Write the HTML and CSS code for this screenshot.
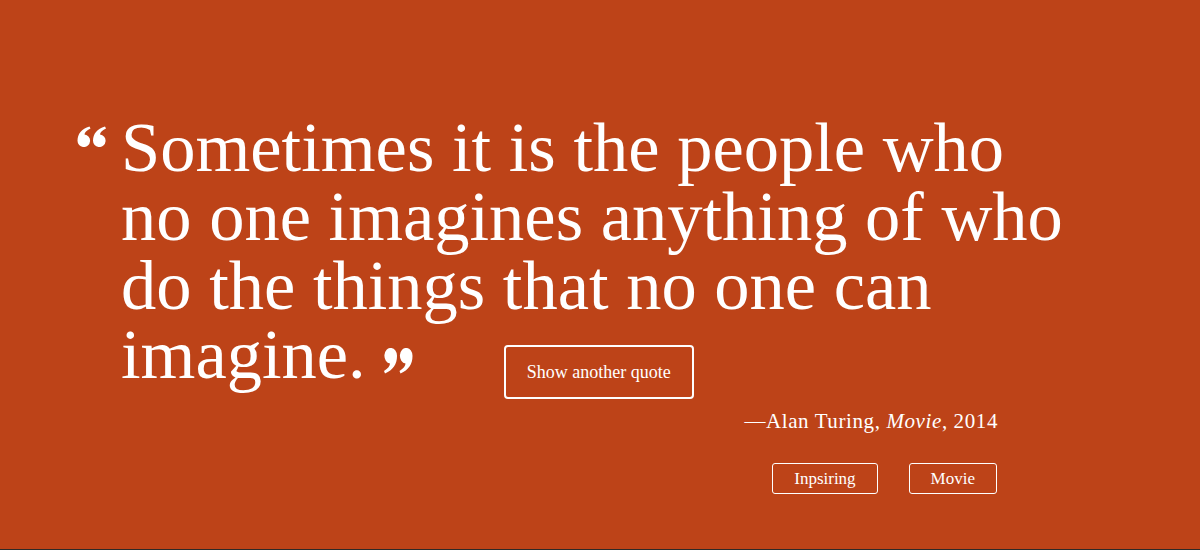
FILE: index.html
```html
<!DOCTYPE html>
<html lang="en">
<head>
<meta charset="utf-8">
<title>Quote</title>
<link rel="stylesheet" href="styles.css">
</head>
<body>
<main class="page">
  <section class="card">
    <div class="quote">
      <svg class="q-open" viewBox="0 0 30 21" aria-hidden="true">
        <path d="M0.5 14.5 C0.5 8 4.5 3 12.5 0.5 L13.5 2.5 C9.5 4.5 7.5 6.5 7.5 8.5 A6.3 6.3 0 1 1 0.5 14.5 Z"/>
        <path d="M16 14.5 C16 8 20 3 28 0.5 L29 2.5 C25 4.5 23 6.5 23 8.5 A6.3 6.3 0 1 1 16 14.5 Z"/>
      </svg>
      <p class="quote-text"><span class="words">Sometimes it is the people who no one imagines anything of who do the things that no one can imagine.</span><svg class="q-close" viewBox="0 0 30 21" preserveAspectRatio="none" aria-hidden="true"><g transform="rotate(180 15 10.5)"><path d="M0.5 14.5 C0.5 8 4.5 3 12.5 0.5 L13.5 2.5 C9.5 4.5 7.5 6.5 7.5 8.5 A6.3 6.3 0 1 1 0.5 14.5 Z"/><path d="M16 14.5 C16 8 20 3 28 0.5 L29 2.5 C25 4.5 23 6.5 23 8.5 A6.3 6.3 0 1 1 16 14.5 Z"/></g></svg><button class="btn-next" type="button">Show another quote</button></p>
    </div>
    <p class="author">—Alan Turing, <em>Movie</em>, 2014</p>
    <div class="tags">
      <a class="tag" href="#">Inpsiring</a>
      <a class="tag" href="#">Movie</a>
    </div>
  </section>
</main>
</body>
</html>
```

FILE: styles.css
```css
html, body {
  margin: 0;
  padding: 0;
}

body {
  background: #2f2a27;
  font-family: "Liberation Serif", "Times New Roman", serif;
  color: #ffffff;
}

.page {
  height: 549px;
  background: #bd4318;
  overflow: hidden;
  padding-top: 113px;
  box-sizing: border-box;
}

.card {
  margin-left: 77px;
  width: 921px;
}

.quote {
  display: flex;
  align-items: flex-start;
  gap: 14px;
}

.q-open {
  flex: none;
  width: 30px;
  height: 21px;
  margin-top: 13px;
  fill: #ffffff;
}

.quote-text {
  flex: none;
  width: 960px;
  margin: 0;
  font-size: 70.5px;
  line-height: 69px;
  font-weight: 400;
}

.q-close {
  width: 30px;
  height: 26px;
  margin-left: 17px;
  vertical-align: 4px;
  fill: #ffffff;
}

.btn-next {
  margin-left: 91px;
  padding: 15px 21px;
  border: 2px solid #ffffff;
  border-radius: 4px;
  background: transparent;
  color: #ffffff;
  font-family: "Liberation Serif", "Times New Roman", serif;
  font-size: 18px;
  line-height: 20px;
  vertical-align: baseline;
  cursor: pointer;
}

.author {
  margin: 7px 0 0;
  text-align: right;
  font-size: 21px;
  line-height: 30px;
  letter-spacing: 0.6px;
}

.author em {
  font-style: italic;
}

.tags {
  display: flex;
  justify-content: flex-end;
  gap: 31px;
  margin-top: 27px;
  padding-right: 1px;
}

.tag {
  display: block;
  padding: 0 21px;
  border: 1px solid #ffffff;
  border-radius: 3px;
  color: #ffffff;
  text-decoration: none;
  font-size: 17px;
  line-height: 29px;
}
```
